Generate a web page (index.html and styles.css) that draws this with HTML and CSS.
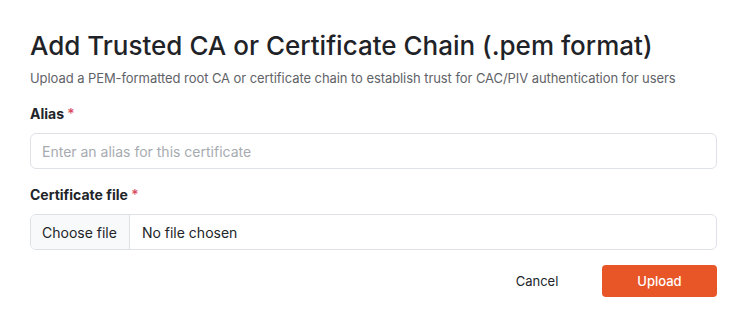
FILE: index.html
```html
<!DOCTYPE html>
<html>
<head>
<meta charset="utf-8">
<link rel="stylesheet" href="styles.css">
</head>
<body>
<div class="dialog">
  <h1 class="title">Add Trusted CA or Certificate Chain (.pem format)</h1>
  <p class="subtitle">Upload a PEM-formatted root CA or certificate chain to establish trust for CAC/PIV authentication for users</p>
  <div class="field">
    <label class="label">Alias <span class="req">*</span></label>
    <div class="input"><span class="placeholder">Enter an alias for this certificate</span></div>
  </div>
  <div class="field">
    <label class="label">Certificate file <span class="req">*</span></label>
    <div class="file">
      <span class="file-btn">Choose file</span>
      <span class="file-name">No file chosen</span>
    </div>
  </div>
  <div class="actions">
    <button class="btn cancel">Cancel</button>
    <button class="btn upload">Upload</button>
  </div>
</div>
</body>
</html>
```

FILE: styles.css
```css
html, body {
  margin: 0;
  padding: 0;
  background: #ffffff;
}
body {
  font-family: Inter, "Liberation Sans", sans-serif;
  color: #212529;
}
.dialog {
  padding: 29px 25px 0 30px;
}
.title {
  margin: 0;
  font-size: 26px;
  font-weight: 500;
  line-height: 34px;
  color: #1f2328;
}
.subtitle {
  margin: 6px 0 0;
  font-size: 13px;
  line-height: 18px;
  color: #5f6368;
  letter-spacing: -0.07px;
}
.field {
  margin-top: 18px;
}
.field + .field {
  margin-top: 17px;
}
.label {
  display: block;
  font-size: 14px;
  font-weight: 700;
  line-height: 18px;
  color: #212529;
}
.req {
  color: #dc4a5e;
  font-weight: 500;
}
.input {
  margin-top: 10px;
  height: 34px;
  border: 1px solid #dee2e6;
  border-radius: 6px;
  display: flex;
  align-items: center;
  padding: 0 11px;
  font-size: 14px;
}
.placeholder {
  color: #a7abb0;
}
.file {
  margin-top: 10px;
  height: 34px;
  border: 1px solid #dee2e6;
  border-radius: 6px;
  display: flex;
  align-items: stretch;
  font-size: 14px;
  overflow: hidden;
}
.file-btn {
  display: flex;
  align-items: center;
  padding: 0 12px 0 11px;
  background: #f8f9fa;
  border-right: 1px solid #dee2e6;
  color: #212529;
}
.file-name {
  display: flex;
  align-items: center;
  padding: 0 12px;
  color: #212529;
}
.actions {
  margin-top: 15px;
  display: flex;
  justify-content: flex-end;
  gap: 10px;
}
.btn {
  font-family: inherit;
  font-size: 13px;
  height: 32px;
  border: none;
  border-radius: 4px;
  cursor: pointer;
}
.cancel {
  background: transparent;
  color: #212529;
  width: 110px;
}
.upload {
  background: #e85527;
  color: #ffffff;
  width: 115px;
  font-weight: 500;
}
```
